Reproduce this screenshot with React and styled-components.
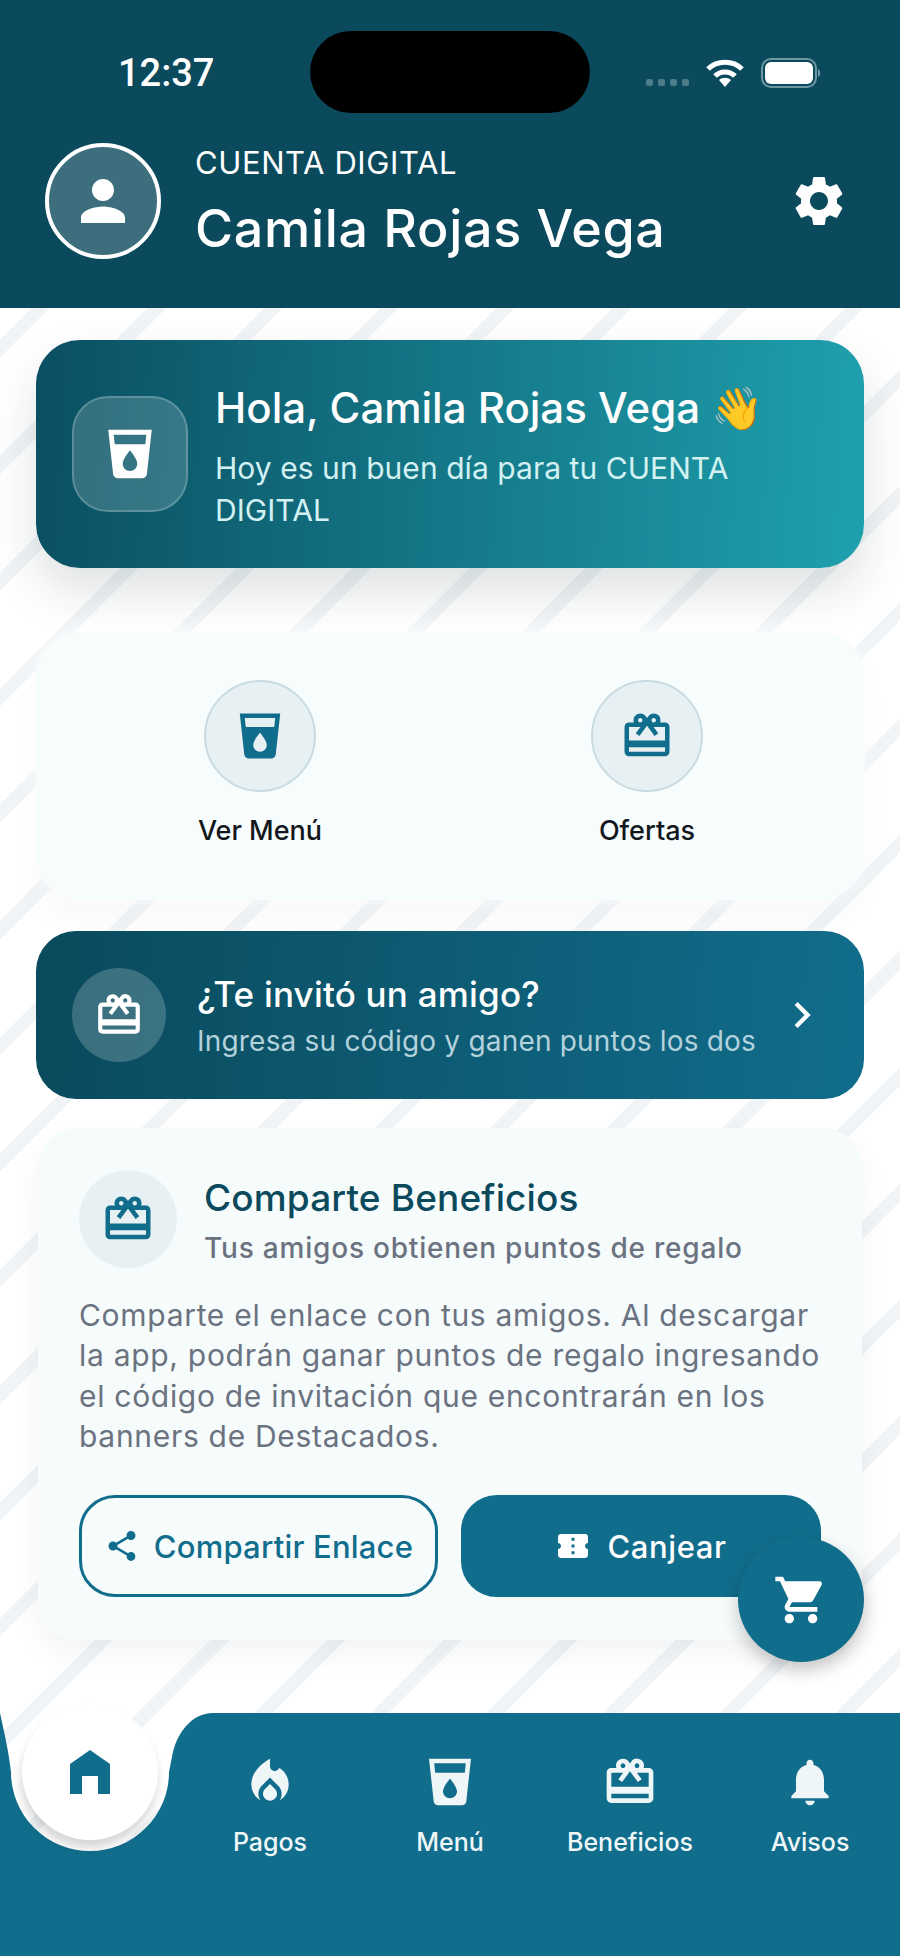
import React from "react";
import styled, { createGlobalStyle } from "styled-components";
import {
  MdPerson,
  MdSettings,
  MdLocalDrink,
  MdCardGiftcard,
  MdChevronRight,
  MdShare,
  MdConfirmationNumber,
  MdShoppingCart,
  MdLocalFireDepartment,
  MdNotifications,
} from "react-icons/md";

const GlobalStyle = createGlobalStyle`
  html, body { margin: 0; padding: 0; }
  body { font-family: Inter, "Noto Sans", sans-serif; }
  * { box-sizing: border-box; }
`;

const Page = styled.div`
  position: relative;
  width: 900px;
  height: 1956px;
  overflow: hidden;
  display: flex;
  flex-direction: column;
  background-color: #ffffff;
  background-image: repeating-linear-gradient(
    135deg,
    #f0f4f6 0,
    #f0f4f6 6.5px,
    #ffffff 6.5px,
    #ffffff 75.7px,
    #f0f4f6 75.7px,
    #f0f4f6 82.2px
  );
`;

const Header = styled.header`
  height: 308px;
  background: #0a4a5c;
  color: #ffffff;
`;

const StatusRow = styled.div`
  display: grid;
  grid-template-columns: 310px 280px 1fr;
  height: 82px;
  margin-top: 31px;
`;

const Time = styled.div`
  padding: 21px 0 0 118px;
  font-family: Roboto, "Liberation Sans", sans-serif;
  font-size: 38px;
  font-weight: 500;
  line-height: 42px;
`;

const Island = styled.div`
  background: #000000;
  border-radius: 41px;
`;

const StatusIcons = styled.div`
  display: flex;
  align-items: flex-start;
  padding: 27px 0 0 56px;
  gap: 17px;
`;

const Dots = styled.div`
  display: flex;
  gap: 5px;
  margin-top: 21px;
`;

const Dot = styled.span`
  width: 7px;
  height: 7px;
  border-radius: 2px;
  background: #4d7c8b;
`;

const UserRow = styled.div`
  display: flex;
  align-items: center;
  height: 116px;
  margin-top: 30px;
  padding: 0 45px;
`;

const Avatar = styled.div`
  width: 116px;
  height: 116px;
  border-radius: 50%;
  border: 4px solid #ffffff;
  background: #3c6e7d;
  display: flex;
  align-items: center;
  justify-content: center;
  flex-shrink: 0;
`;

const UserText = styled.div`
  margin-left: 34px;
  padding-top: 5px;
  flex: 1;
`;

const AccountLabel = styled.div`
  font-size: 31px;
  font-weight: 400;
  line-height: 40px;
  letter-spacing: 0.6px;
  margin-top: -2px;
`;

const UserName = styled.div`
  font-size: 52px;
  font-weight: 500;
  line-height: 66px;
  letter-spacing: 0.7px;
  margin-top: 13px;
`;

const GearWrap = styled.div`
  display: flex;
  margin-right: 6px;
`;

const Main = styled.main`
  flex: 1;
  padding: 32px 36px 0;
  display: flex;
  flex-direction: column;
`;

const HeroCard = styled.section`
  height: 228px;
  border-radius: 44px;
  background: linear-gradient(93deg, #0a4f62 0%, #1fa0ad 100%);
  box-shadow: 0 24px 48px rgba(10, 30, 40, 0.13);
  display: flex;
  align-items: center;
  padding: 0 36px;
  color: #ffffff;
`;

const HeroIcon = styled.div`
  width: 116px;
  height: 116px;
  border-radius: 36px;
  background: rgba(255, 255, 255, 0.17);
  border: 2px solid rgba(255, 255, 255, 0.2);
  display: flex;
  align-items: center;
  justify-content: center;
  flex-shrink: 0;
`;

const HeroText = styled.div`
  margin-left: 27px;
  margin-top: 3px;
`;

const HeroTitle = styled.div`
  font-size: 42px;
  font-weight: 500;
  line-height: 56px;
`;

const HeroSub = styled.div`
  font-size: 30px;
  line-height: 42.5px;
  letter-spacing: 0.05px;
  color: #d3f1f3;
  margin-top: 11px;
`;

const QuickCard = styled.section`
  height: 268px;
  margin-top: 64px;
  border-radius: 44px;
  background: #f7fcfd;
  box-shadow: 0 0 22px rgba(255, 255, 255, 0.9), 0 18px 30px rgba(10, 40, 55, 0.03);
  display: grid;
  grid-template-columns: 386px 388px;
  padding: 48px 0 0 31px;
`;

const QuickItem = styled.div`
  display: flex;
  flex-direction: column;
  align-items: center;
`;

const QuickCircle = styled.div`
  width: 112px;
  height: 112px;
  border-radius: 50%;
  background: #e7f1f4;
  border: 2px solid #c9dbe2;
  color: #116d8c;
  display: flex;
  align-items: center;
  justify-content: center;
`;

const QuickLabel = styled.div`
  margin-top: 21px;
  font-size: 27px;
  font-weight: 500;
  line-height: 36px;
  color: #12181c;
`;

const InviteBanner = styled.section`
  height: 168px;
  margin-top: 31px;
  border-radius: 40px;
  background: linear-gradient(95deg, #0a4a5c 0%, #116d8c 100%);
  display: flex;
  align-items: center;
  padding: 0 36px;
  color: #ffffff;
`;

const InviteIcon = styled.div`
  width: 94px;
  height: 94px;
  border-radius: 50%;
  background: rgba(255, 255, 255, 0.2);
  display: flex;
  align-items: center;
  justify-content: center;
  flex-shrink: 0;
`;

const InviteText = styled.div`
  flex: 1;
  margin-left: 31px;
  white-space: nowrap;
`;

const InviteTitle = styled.div`
  font-size: 35px;
  font-weight: 500;
  line-height: 44px;
  letter-spacing: 0.2px;
`;

const InviteSub = styled.div`
  font-size: 28px;
  line-height: 36px;
  letter-spacing: 0.2px;
  margin-top: 7px;
  color: #b4d2dc;
`;

const ShareCard = styled.section`
  height: 512px;
  margin: 29px 2px 0;
  border-radius: 40px;
  background: #f6fbfc;
  box-shadow: 0 14px 30px rgba(10, 40, 55, 0.05);
  padding: 42px 41px 0;
`;

const ShareHead = styled.div`
  display: flex;
  align-items: center;
`;

const ShareIcon = styled.div`
  width: 98px;
  height: 98px;
  border-radius: 50%;
  background: #e7f1f4;
  color: #116d8c;
  display: flex;
  align-items: center;
  justify-content: center;
  flex-shrink: 0;
`;

const ShareHeadText = styled.div`
  margin-left: 27px;
  margin-top: 2px;
  white-space: nowrap;
`;

const ShareTitle = styled.div`
  font-size: 37px;
  font-weight: 500;
  line-height: 46px;
  letter-spacing: 0.15px;
  color: #0a4a5c;
`;

const ShareSub = styled.div`
  font-size: 28px;
  font-weight: 500;
  line-height: 36px;
  letter-spacing: 0.8px;
  margin-top: 9px;
  color: #6b7280;
`;

const ShareBody = styled.p`
  margin: 27px 0 0;
  font-size: 30px;
  line-height: 40.3px;
  letter-spacing: 0.7px;
  white-space: nowrap;
  color: #6b7280;
`;

const ButtonRow = styled.div`
  display: grid;
  grid-template-columns: 359px 360px;
  gap: 23px;
  margin-top: 39px;
`;

const ActionButton = styled.button`
  height: 102px;
  border-radius: 36px;
  font-family: inherit;
  font-size: 31px;
  font-weight: 500;
  letter-spacing: ${(p) => (p.$filled ? "0.6px" : "0.2px")};
  white-space: nowrap;
  display: flex;
  align-items: center;
  justify-content: center;
  gap: ${(p) => (p.$filled ? "16px" : "14px")};
  padding: 0;
  border: 3px solid #116d8c;
  color: ${(p) => (p.$filled ? "#ffffff" : "#116d8c")};
  background: ${(p) => (p.$filled ? "#116d8c" : "transparent")};
`;

const CartFab = styled.div`
  position: absolute;
  left: 738px;
  top: 1537px;
  width: 126px;
  height: 125px;
  border-radius: 50%;
  background: #116d8c;
  color: #ffffff;
  box-shadow: 0 8px 18px rgba(0, 0, 0, 0.22);
  display: flex;
  align-items: center;
  justify-content: center;
`;

const NavWrap = styled.div`
  position: relative;
  height: 243px;
`;

const NavBar = styled.nav`
  height: 100%;
  background: #116d8c;
  color: #eef6f8;
  clip-path: path("M0 0 V243 H900 V0 H213 C192 0 176 20 172 44 L169 59 A79 79 0 0 1 11 59 C9 40 4 18 0 0 Z");
  display: grid;
  grid-template-columns: repeat(4, 180px);
  padding: 41px 0 0 180px;
`;

const NavItem = styled.div`
  display: flex;
  flex-direction: column;
  align-items: center;
`;

const NavLabel = styled.div`
  font-size: 25px;
  font-weight: 500;
  line-height: 34px;
  margin-top: 15px;
`;

const HomeButton = styled.div`
  position: absolute;
  left: 22px;
  top: -9px;
  width: 136px;
  height: 136px;
  border-radius: 50%;
  background: #ffffff;
  box-shadow: -1px 8px 10px rgba(0, 0, 0, 0.16);
  color: #116d8c;
  display: flex;
  align-items: center;
  justify-content: center;
`;

const WifiIcon = () => (
  <svg width="38" height="30" viewBox="0 0 38 30" fill="none" stroke="#fff" strokeWidth="5">
    <path d="M2 11 C11 2 27 2 36 11" />
    <path d="M9 18 C14.5 12.5 23.5 12.5 29 18" />
    <path d="M13 22 L19 29 L25 22 C21.5 19 16.5 19 13 22 Z" fill="#fff" stroke="none" />
  </svg>
);

const BatteryIcon = () => (
  <svg width="61" height="30" viewBox="0 0 61 30">
    <rect x="1" y="1" width="54" height="28" rx="9" fill="none" stroke="#6f97a3" strokeWidth="2" />
    <rect x="4" y="4" width="48" height="22" rx="6" fill="#fff" />
    <path d="M57 11 C60 12 60 18 57 19 Z" fill="#6f97a3" />
  </svg>
);

const HomeIcon = () => (
  <svg width="40" height="44" viewBox="0 0 40 44" fill="#116d8c">
    <path d="M20 0 L40 14 V44 H28 V26 H12 V44 H0 V14 Z" />
  </svg>
);

const navItems = [
  { label: "Pagos", Icon: MdLocalFireDepartment },
  { label: "Menú", Icon: MdLocalDrink },
  { label: "Beneficios", Icon: MdCardGiftcard },
  { label: "Avisos", Icon: MdNotifications },
];

export default function App() {
  return (
    <Page>
      <GlobalStyle />
      <Header>
        <StatusRow>
          <Time>12:37</Time>
          <Island />
          <StatusIcons>
            <Dots>
              <Dot />
              <Dot />
              <Dot />
              <Dot />
            </Dots>
            <WifiIcon />
            <BatteryIcon />
          </StatusIcons>
        </StatusRow>
        <UserRow>
          <Avatar>
            <MdPerson size={66} color="#ffffff" />
          </Avatar>
          <UserText>
            <AccountLabel>CUENTA DIGITAL</AccountLabel>
            <UserName>Camila Rojas Vega</UserName>
          </UserText>
          <GearWrap>
            <MdSettings size={60} color="#ffffff" />
          </GearWrap>
        </UserRow>
      </Header>

      <Main>
        <HeroCard>
          <HeroIcon>
            <MdLocalDrink size={58} />
          </HeroIcon>
          <HeroText>
            <HeroTitle>Hola, Camila Rojas Vega 👋</HeroTitle>
            <HeroSub>
              Hoy es un buen día para tu CUENTA
              <br />
              DIGITAL
            </HeroSub>
          </HeroText>
        </HeroCard>

        <QuickCard>
          <QuickItem>
            <QuickCircle>
              <MdLocalDrink size={54} />
            </QuickCircle>
            <QuickLabel>Ver Menú</QuickLabel>
          </QuickItem>
          <QuickItem>
            <QuickCircle>
              <MdCardGiftcard size={54} />
            </QuickCircle>
            <QuickLabel>Ofertas</QuickLabel>
          </QuickItem>
        </QuickCard>

        <InviteBanner>
          <InviteIcon>
            <MdCardGiftcard size={50} />
          </InviteIcon>
          <InviteText>
            <InviteTitle>¿Te invitó un amigo?</InviteTitle>
            <InviteSub>Ingresa su código y ganen puntos los dos</InviteSub>
          </InviteText>
          <MdChevronRight size={52} />
        </InviteBanner>

        <ShareCard>
          <ShareHead>
            <ShareIcon>
              <MdCardGiftcard size={54} />
            </ShareIcon>
            <ShareHeadText>
              <ShareTitle>Comparte Beneficios</ShareTitle>
              <ShareSub>Tus amigos obtienen puntos de regalo</ShareSub>
            </ShareHeadText>
          </ShareHead>
          <ShareBody>
            Comparte el enlace con tus amigos. Al descargar
            <br />
            la app, podrán ganar puntos de regalo ingresando
            <br />
            el código de invitación que encontrarán en los
            <br />
            banners de Destacados.
          </ShareBody>
          <ButtonRow>
            <ActionButton>
              <MdShare size={36} />
              Compartir Enlace
            </ActionButton>
            <ActionButton $filled>
              <MdConfirmationNumber size={36} />
              Canjear
            </ActionButton>
          </ButtonRow>
        </ShareCard>
      </Main>

      <CartFab>
        <MdShoppingCart size={56} />
      </CartFab>

      <NavWrap>
        <NavBar>
          {navItems.map(({ label, Icon }) => (
            <NavItem key={label}>
              <Icon size={56} />
              <NavLabel>{label}</NavLabel>
            </NavItem>
          ))}
        </NavBar>
        <HomeButton>
          <HomeIcon />
        </HomeButton>
      </NavWrap>
    </Page>
  );
}
